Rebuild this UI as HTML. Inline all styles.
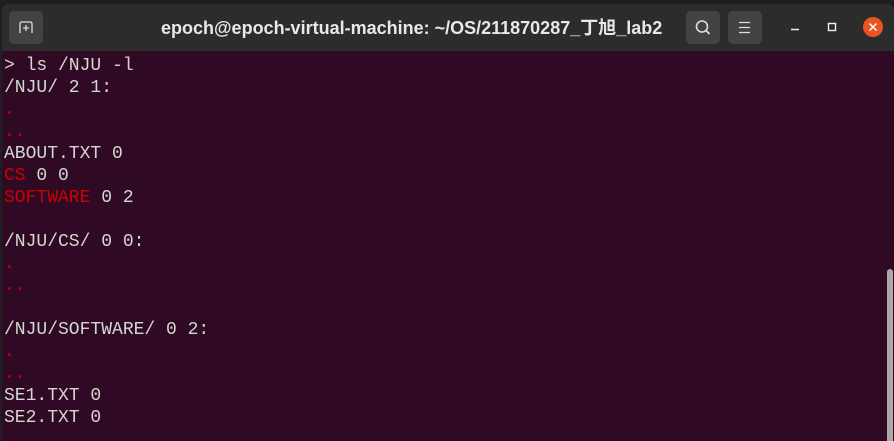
<!DOCTYPE html>
<html><head><style>
html,body{margin:0;padding:0;width:894px;height:441px;overflow:hidden;background:#1f1f1f;}
#win{position:absolute;left:2px;top:4px;width:892px;height:437px;background:#300a24;}
#bar{position:absolute;left:0;top:0;width:892px;height:47px;background:#2c2c2c;border-radius:6px 6px 0 0;}
.btn{position:absolute;top:7px;width:34px;height:33px;background:#434343;border-radius:5px;}
#title{position:absolute;left:159px;top:13px;white-space:nowrap;color:#e8e8e8;font-weight:bold;font-size:18px;line-height:22px;font-family:"Liberation Sans","Noto Sans CJK SC",sans-serif;}
#term{position:absolute;left:2px;top:51px;font:18px/22px "Liberation Mono",monospace;color:#d3d7cf;white-space:pre;}
.r{color:#cc0000}
#sb{position:absolute;left:885px;top:265px;width:6px;height:172px;background:#a8a8a8;border-radius:3px 3px 0 0;}
</style></head><body>
<div id="win">
<div id="bar">
<div class="btn" style="left:7px"><svg width="34" height="33"><path d="M11 22V13q0-2 2-2h8q2 0 2 2v9" fill="none" stroke="#ddd" stroke-width="1.3"/><path d="M17 14v6M14 17h6" stroke="#ddd" stroke-width="1.3"/></svg></div>
<div id="title">epoch@epoch-virtual-machine: ~/OS/211870287_丁旭_lab2</div>
<div class="btn" style="left:684px"><svg width="34" height="33"><circle cx="16" cy="15.5" r="5.5" fill="none" stroke="#ddd" stroke-width="1.6"/><path d="M20 19.5l3.5 3.5" stroke="#ddd" stroke-width="1.8"/></svg></div>
<div class="btn" style="left:726px"><svg width="34" height="33"><path d="M11 11.5h11M11 16.5h11M11 21.5h11" stroke="#ddd" stroke-width="1.3"/></svg></div>
<svg style="position:absolute;left:780px;top:0" width="112" height="47"><path d="M9 25.5h8" stroke="#eee" stroke-width="1.5"/><rect x="46.5" y="19.5" width="7" height="7" fill="none" stroke="#eee" stroke-width="1.4"/><circle cx="91" cy="23" r="10" fill="#e95420"/><path d="M87.5 19.5l7 7M94.5 19.5l-7 7" stroke="#fff" stroke-width="1.5"/></svg>
</div>
<div id="term">&gt; ls /NJU -l
/NJU/ 2 1:
<span class="r">.</span>
<span class="r">..</span>
ABOUT.TXT 0
<span class="r">CS</span> 0 0
<span class="r">SOFTWARE</span> 0 2

/NJU/CS/ 0 0:
<span class="r">.</span>
<span class="r">..</span>

/NJU/SOFTWARE/ 0 2:
<span class="r">.</span>
<span class="r">..</span>
SE1.TXT 0
SE2.TXT 0</div>
<div id="sb"></div>
</div>
</body></html>
